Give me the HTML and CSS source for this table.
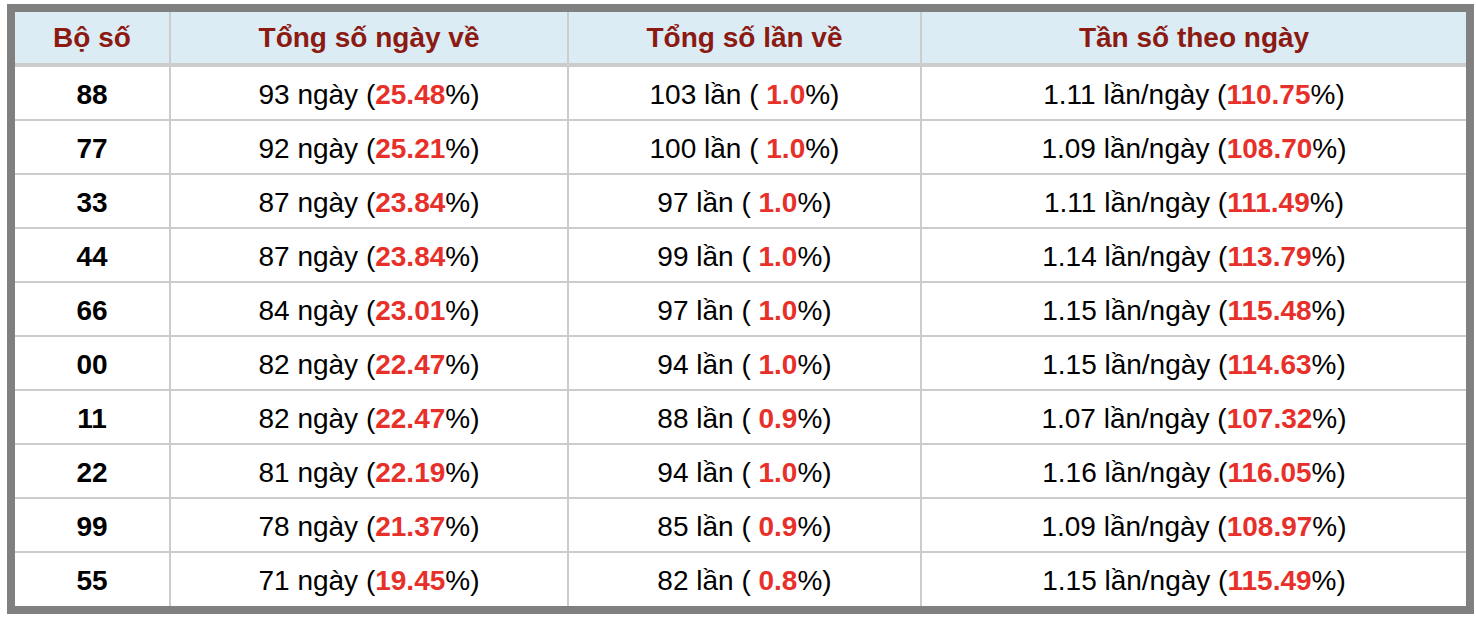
FILE: index.html
```html
<!DOCTYPE html>
<html lang="vi">
<head>
<meta charset="utf-8">
<link rel="stylesheet" href="styles.css">
</head>
<body>
<div class="frame">
<table class="stats">
<colgroup><col class="c1"><col class="c2"><col class="c3"><col class="c4"></colgroup>
<thead>
<tr><th>Bộ số</th><th>Tổng số ngày về</th><th>Tổng số lần về</th><th>Tần số theo ngày</th></tr>
</thead>
<tbody>
<tr><td class="num">88</td><td>93 ngày (<b>25.48</b>%)</td><td>103 lần ( <b>1.0</b>%)</td><td>1.11 lần/ngày (<b>110.75</b>%)</td></tr>
<tr><td class="num">77</td><td>92 ngày (<b>25.21</b>%)</td><td>100 lần ( <b>1.0</b>%)</td><td>1.09 lần/ngày (<b>108.70</b>%)</td></tr>
<tr><td class="num">33</td><td>87 ngày (<b>23.84</b>%)</td><td>97 lần ( <b>1.0</b>%)</td><td>1.11 lần/ngày (<b>111.49</b>%)</td></tr>
<tr><td class="num">44</td><td>87 ngày (<b>23.84</b>%)</td><td>99 lần ( <b>1.0</b>%)</td><td>1.14 lần/ngày (<b>113.79</b>%)</td></tr>
<tr><td class="num">66</td><td>84 ngày (<b>23.01</b>%)</td><td>97 lần ( <b>1.0</b>%)</td><td>1.15 lần/ngày (<b>115.48</b>%)</td></tr>
<tr><td class="num">00</td><td>82 ngày (<b>22.47</b>%)</td><td>94 lần ( <b>1.0</b>%)</td><td>1.15 lần/ngày (<b>114.63</b>%)</td></tr>
<tr><td class="num">11</td><td>82 ngày (<b>22.47</b>%)</td><td>88 lần ( <b>0.9</b>%)</td><td>1.07 lần/ngày (<b>107.32</b>%)</td></tr>
<tr><td class="num">22</td><td>81 ngày (<b>22.19</b>%)</td><td>94 lần ( <b>1.0</b>%)</td><td>1.16 lần/ngày (<b>116.05</b>%)</td></tr>
<tr><td class="num">99</td><td>78 ngày (<b>21.37</b>%)</td><td>85 lần ( <b>0.9</b>%)</td><td>1.09 lần/ngày (<b>108.97</b>%)</td></tr>
<tr><td class="num">55</td><td>71 ngày (<b>19.45</b>%)</td><td>82 lần ( <b>0.8</b>%)</td><td>1.15 lần/ngày (<b>115.49</b>%)</td></tr>
</tbody>
</table>
</div>
</body>
</html>
```
FILE: styles.css
```css
html, body {
  margin: 0;
  padding: 0;
  background: #ffffff;
}
body {
  padding: 4px 0 0 7px;
  font-family: "Liberation Sans", Arial, Helvetica, sans-serif;
}
.frame {
  width: 1451px;
  border: 8px solid #808080;
  background: #ffffff;
}
.stats {
  width: 1451px;
  border-collapse: separate;
  border-spacing: 0;
  table-layout: fixed;
  font-size: 28px;
  color: #000000;
}
.c1 { width: 156px; }
.c2 { width: 398px; }
.c3 { width: 353px; }
.c4 { width: 544px; }
.stats th {
  height: 55px;
  padding: 1px 0 0;
  box-sizing: border-box;
  background: #dcecf5;
  color: #8b1a12;
  font-weight: bold;
  border-right: 2px solid #cccccc;
  border-bottom: 4px solid #cccccc;
  text-align: center;
  vertical-align: middle;
}
.stats td {
  height: 54px;
  box-sizing: border-box;
  padding: 3px 0 0;
  text-align: center;
  vertical-align: middle;
  border-right: 2px solid #cccccc;
  border-bottom: 2px solid #cccccc;
}
.stats th:last-child,
.stats td:last-child {
  border-right: none;
}
.stats tbody tr:last-child td {
  border-bottom: none;
  height: 53px;
}
.stats td.num {
  font-weight: bold;
}
.stats b {
  color: #e8302a;
  font-weight: bold;
}
```
